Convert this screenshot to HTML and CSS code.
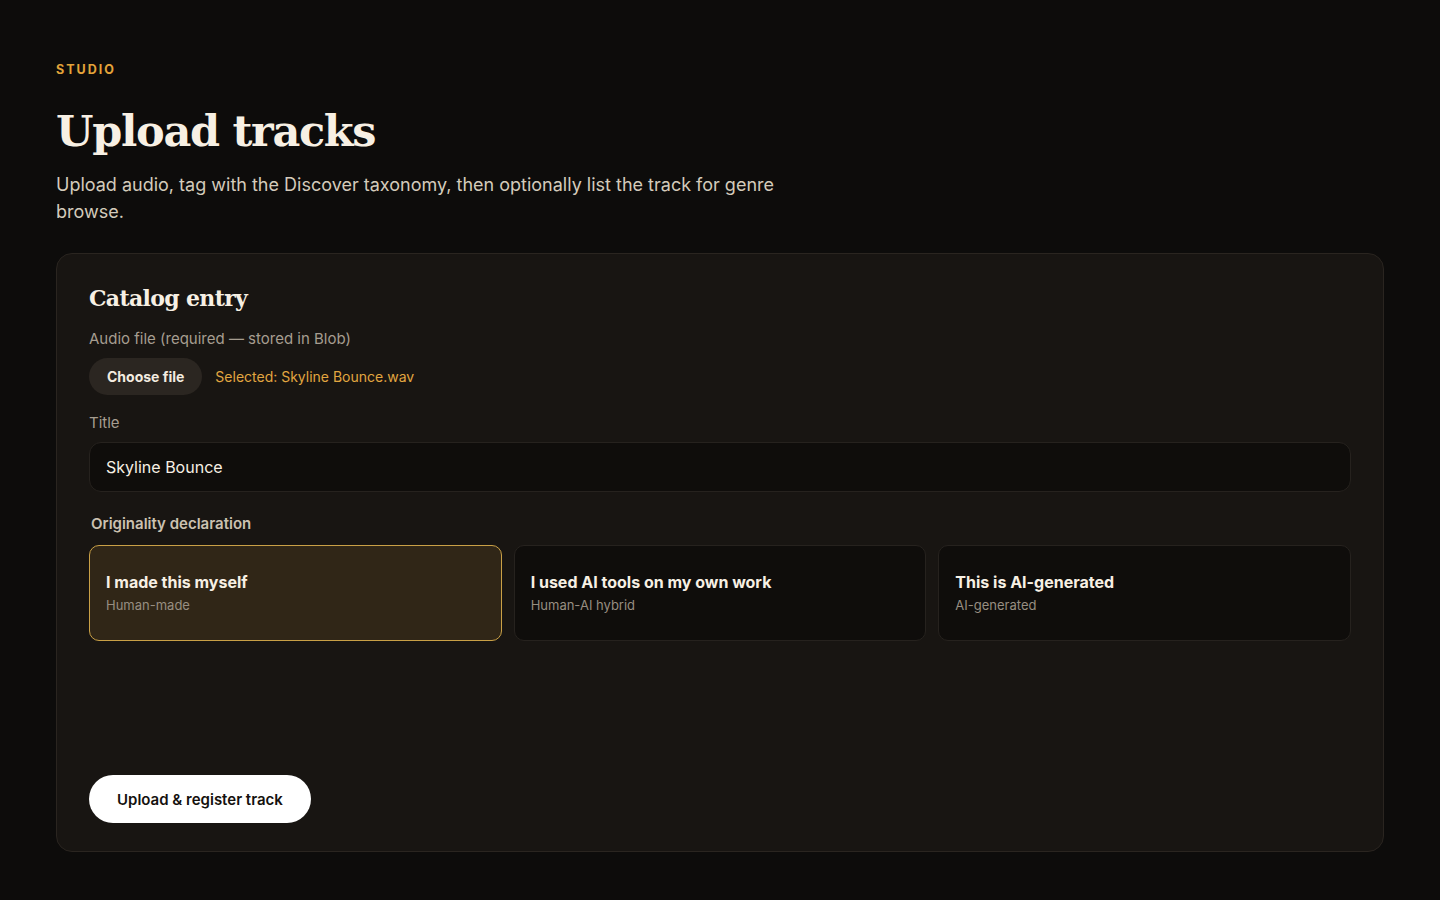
FILE: index.html
```html
<!DOCTYPE html>
<html lang="en">
<head>
<meta charset="utf-8">
<title>Upload tracks — Studio</title>
<link rel="stylesheet" href="styles.css">
</head>
<body>
<main class="page">
  <header class="intro">
    <p class="eyebrow">STUDIO</p>
    <h1 class="title">Upload tracks</h1>
    <p class="lede">Upload audio, tag with the Discover taxonomy, then optionally list the track for genre browse.</p>
  </header>

  <form class="panel">
    <h2 class="panel-title">Catalog entry</h2>

    <div class="field">
      <span class="field-label">Audio file (required — stored in Blob)</span>
      <div class="file-row">
        <button type="button" class="file-btn">Choose file</button>
        <span class="file-name">Selected: Skyline Bounce.wav</span>
      </div>
    </div>

    <div class="field">
      <label class="field-label" for="track-title">Title</label>
      <input id="track-title" class="text-input" type="text" value="Skyline Bounce">
    </div>

    <div class="field field-group">
      <span class="group-label">Originality declaration</span>
      <div class="choices">
        <div class="choice is-active">
          <span class="choice-title">I made this myself</span>
          <span class="choice-sub">Human-made</span>
        </div>
        <div class="choice">
          <span class="choice-title">I used AI tools on my own work</span>
          <span class="choice-sub">Human-AI hybrid</span>
        </div>
        <div class="choice">
          <span class="choice-title">This is AI-generated</span>
          <span class="choice-sub">AI-generated</span>
        </div>
      </div>
    </div>

    <div class="actions">
      <button type="button" class="submit-btn">Upload &amp; register track</button>
    </div>
  </form>
</main>
</body>
</html>
```

FILE: styles.css
```css
* { box-sizing: border-box; }

html, body {
  margin: 0;
  background: #0d0c0b;
  color: #f3ece0;
  font-family: Inter, "Noto Sans", sans-serif;
}

.page {
  padding: 62px 56px 48px;
}

.eyebrow {
  margin: 0;
  font-size: 12.5px;
  font-weight: 700;
  letter-spacing: 0.16em;
  color: #e3a43a;
  line-height: 16px;
}

.title {
  margin: 25px 0 0;
  font-family: "DejaVu Serif", "Liberation Serif", serif;
  font-weight: 700;
  font-size: 43px;
  line-height: 56px;
  letter-spacing: -0.03em;
  color: #f7f0e4;
}

.lede {
  margin: 12px 0 0;
  max-width: 740px;
  font-size: 18px;
  line-height: 27px;
  color: #d4cbbb;
}

.panel {
  margin-top: 28px;
  background: #181512;
  border: 1px solid #2a2520;
  border-radius: 16px;
  padding: 26px 32px 28px;
  display: flex;
  flex-direction: column;
}

.panel-title {
  margin: 0;
  font-family: "DejaVu Serif", "Liberation Serif", serif;
  font-weight: 700;
  font-size: 22px;
  line-height: 36px;
  letter-spacing: -0.03em;
  color: #f7f0e4;
}

.field {
  display: flex;
  flex-direction: column;
}

.field + .field { margin-top: 18px; }
.field + .field-group { margin-top: 22px; }
.panel-title + .field { margin-top: 13px; }

.field-label {
  font-size: 15px;
  line-height: 20px;
  color: #a69d90;
}

.file-row {
  margin-top: 9px;
  display: flex;
  align-items: center;
  gap: 13px;
}

.file-btn {
  height: 37px;
  padding: 0 18px;
  border: 0;
  border-radius: 999px;
  background: #2b2621;
  color: #f3ece0;
  font-family: inherit;
  font-size: 14px;
  font-weight: 700;
}

.file-name {
  font-size: 14px;
  color: #e2a640;
}

.text-input {
  margin-top: 9px;
  height: 50px;
  padding: 0 16px;
  background: #0f0d0b;
  border: 1px solid #26221e;
  border-radius: 12px;
  color: #f7f0e4;
  font-family: inherit;
  font-size: 16px;
  outline: none;
}

.group-label {
  padding-left: 2px;
  font-size: 15px;
  font-weight: 600;
  line-height: 20px;
  color: #cbc1b0;
}

.choices {
  margin-top: 11px;
  display: grid;
  grid-template-columns: repeat(3, 1fr);
  gap: 12px;
}

.choice {
  height: 96px;
  padding: 0 16px 1px;
  display: flex;
  flex-direction: column;
  justify-content: center;
  gap: 3px;
  background: #0f0d0b;
  border: 1px solid #26221e;
  border-radius: 10px;
}

.choice.is-active {
  background: #302617;
  border-color: #c9a046;
}

.choice-title {
  font-size: 16px;
  font-weight: 700;
  line-height: 22px;
  color: #f7f0e4;
}

.choice-sub {
  font-size: 13px;
  line-height: 18px;
  color: #978e81;
}

.actions {
  margin-top: 134px;
  display: flex;
}

.submit-btn {
  height: 48px;
  padding: 0 28px;
  border: 0;
  border-radius: 999px;
  background: #ffffff;
  color: #14110e;
  font-family: inherit;
  font-size: 15px;
  font-weight: 600;
}
```
